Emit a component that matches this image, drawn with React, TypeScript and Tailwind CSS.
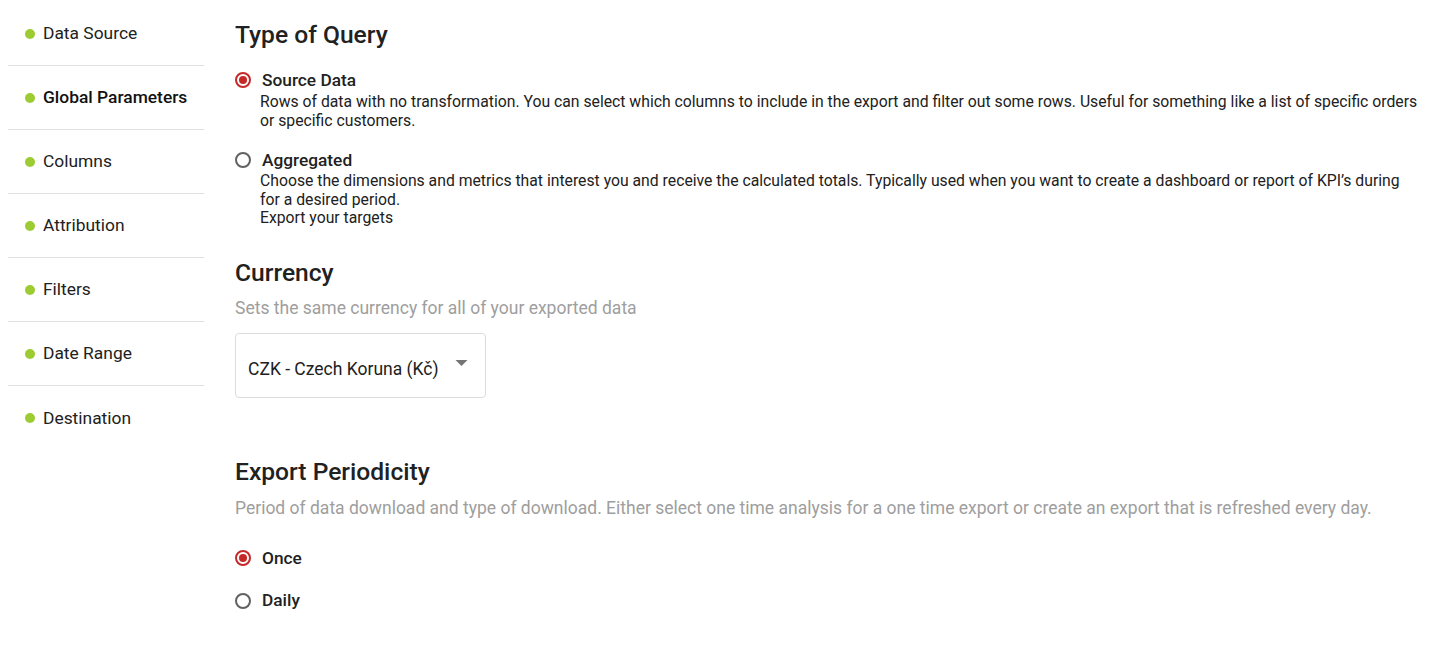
import React from "react";

const navItems = [
  { label: "Data Source", active: false },
  { label: "Global Parameters", active: true },
  { label: "Columns", active: false },
  { label: "Attribution", active: false },
  { label: "Filters", active: false },
  { label: "Date Range", active: false },
  { label: "Destination", active: false },
];

function Radio({ checked }: { checked: boolean }) {
  return checked ? (
    <span className="flex h-[16px] w-[16px] shrink-0 items-center justify-center rounded-full border-2 border-[#c62828]">
      <span className="block h-[8px] w-[8px] rounded-full bg-[#c62828]" />
    </span>
  ) : (
    <span className="block h-[16px] w-[16px] shrink-0 rounded-full border-2 border-[#616161]" />
  );
}

export default function App() {
  return (
    <div className="flex min-h-[646px] bg-white text-[#212121]" style={{ fontFamily: "Roboto, 'Noto Sans', sans-serif" }}>
      <aside className="w-[204px] shrink-0 pl-2 pt-[2px]">
        {navItems.map((item, i) => (
          <div
            key={item.label}
            className={`flex h-[64px] items-center gap-[8px] pl-[17px] ${i < navItems.length - 1 ? "border-b border-[#e0e0e0]" : ""}`}
          >
            <span className="block h-[10px] w-[10px] rounded-full bg-[#9ccc32]" />
            <span className={`text-[17.4px] ${item.active ? "font-medium text-[#111]" : "text-[#212121]"}`}>{item.label}</span>
          </div>
        ))}
      </aside>
      <main className="flex-1 pl-[31px] pr-[16px] pt-[19px]">
        <h2 className="text-[24.6px] font-medium leading-[32px]">Type of Query</h2>
        <div className="mt-[19px] flex items-center gap-[11px]">
          <Radio checked />
          <div className="text-[17.3px] font-medium leading-[20px]">Source Data</div>
        </div>
        <p className="mt-[3px] pl-[25px] text-[15.75px] leading-[18.5px]">
          Rows of data with no transformation. You can select which columns to include in the export and filter out some rows. Useful for something like a list of specific orders or specific customers.
        </p>
        <div className="mt-[20px] flex items-center gap-[11px]">
          <Radio checked={false} />
          <div className="text-[17.3px] font-medium leading-[20px]">Aggregated</div>
        </div>
        <p className="mt-[2px] pl-[25px] text-[15.75px] leading-[18.5px]">
          Choose the dimensions and metrics that interest you and receive the calculated totals. Typically used when you want to create a dashboard or report of KPI’s during for a desired period.
          <br />
          Export your targets
        </p>

        <h2 className="mt-[29px] text-[24.6px] font-medium leading-[32px]">Currency</h2>
        <p className="mt-[7px] text-[17.5px] leading-[24px] text-[#9e9e9e]">Sets the same currency for all of your exported data</p>
        <div className="mt-[13px] flex h-[65px] w-[251px] items-center justify-between rounded-[4px] border border-[#dcdcdc] pl-[12px] pr-[17px]">
          <span className="pt-[9px] text-[17.5px]">CZK - Czech Koruna (Kč)</span>
          <svg width="13" height="6" viewBox="0 0 10 5" className="-mt-[4px]"><path d="M0 0 L5 5 L10 0 Z" fill="#757575" /></svg>
        </div>

        <h2 className="mt-[58px] text-[24.6px] font-medium leading-[32px]">Export Periodicity</h2>
        <p className="mt-[8px] text-[17.5px] leading-[24px] text-[#9e9e9e]">
          Period of data download and type of download. Either select one time analysis for a one time export or create an export that is refreshed every day.
        </p>
        <div className="mt-[26px] flex items-center gap-[11px]">
          <Radio checked />
          <span className="text-[17.3px] font-medium">Once</span>
        </div>
        <div className="mt-[17px] flex items-center gap-[11px]">
          <Radio checked={false} />
          <span className="text-[17.3px] font-medium">Daily</span>
        </div>
      </main>
    </div>
  );
}
